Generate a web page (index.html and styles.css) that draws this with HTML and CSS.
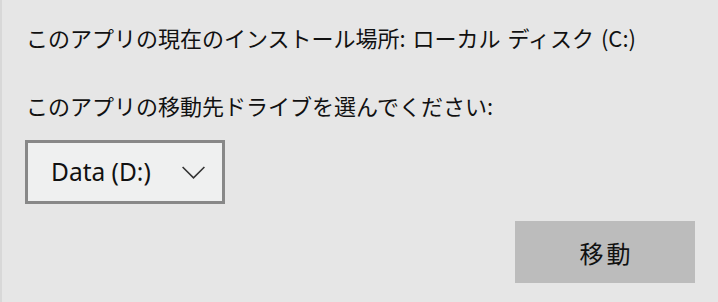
FILE: index.html
```html
<!DOCTYPE html>
<html lang="ja">
<head>
<meta charset="utf-8">
<link rel="stylesheet" href="styles.css">
</head>
<body>
<div class="dialog">
  <p class="line line-first">このアプリの現在のインストール場所: ローカル ディスク (C:)</p>
  <p class="line line-second">このアプリの移動先ドライブを選んでください:</p>
  <div class="select">
    <span class="select-label">Data (D:)</span>
    <svg class="chevron" width="23" height="13" viewBox="0 0 23 13"><path d="M0.6 1 L11.5 11.8 L22.4 1" fill="none" stroke="#333" stroke-width="1.6"/></svg>
  </div>
  <div class="actions">
    <div class="btn">移動</div>
  </div>
</div>
</body>
</html>
```
FILE: styles.css
```css
html, body {
  margin: 0;
  padding: 0;
  background: #e6e6e6;
}
body {
  width: 718px;
  height: 302px;
  overflow: hidden;
  font-family: "Noto Sans CJK JP", "Noto Sans", sans-serif;
  color: #111;
}
.dialog {
  box-sizing: border-box;
  height: 302px;
  border-left: 2px solid #d8d8d8;
  padding: 20px 0 0 24px;
  display: flex;
  flex-direction: column;
}
.line {
  margin: 0;
  font-size: 22px;
  line-height: 35px;
}
.line-first {
  word-spacing: 2px;
}
.line-second {
  margin-top: 33px;
}
.select {
  margin-top: 17px;
  margin-left: -1px;
  box-sizing: border-box;
  width: 200px;
  height: 64px;
  border: 3px solid #888;
  background: #eff0f0;
  display: flex;
  align-items: center;
  padding-left: 23px;
}
.select-label {
  font-family: "Noto Sans", "Noto Sans CJK JP", sans-serif;
  font-size: 24.5px;
  color: #111;
  width: 131px;
  line-height: 30px;
}
.chevron {
  display: block;
}
.actions {
  display: flex;
  justify-content: flex-end;
  padding-right: 23px;
  margin-top: 17px;
}
.btn {
  width: 180px;
  height: 62px;
  background: #bcbcbc;
  display: flex;
  align-items: center;
  justify-content: center;
  font-size: 24px;
  letter-spacing: 3px;
  padding-left: 3px;
  box-sizing: border-box;
  color: #111;
}
```
